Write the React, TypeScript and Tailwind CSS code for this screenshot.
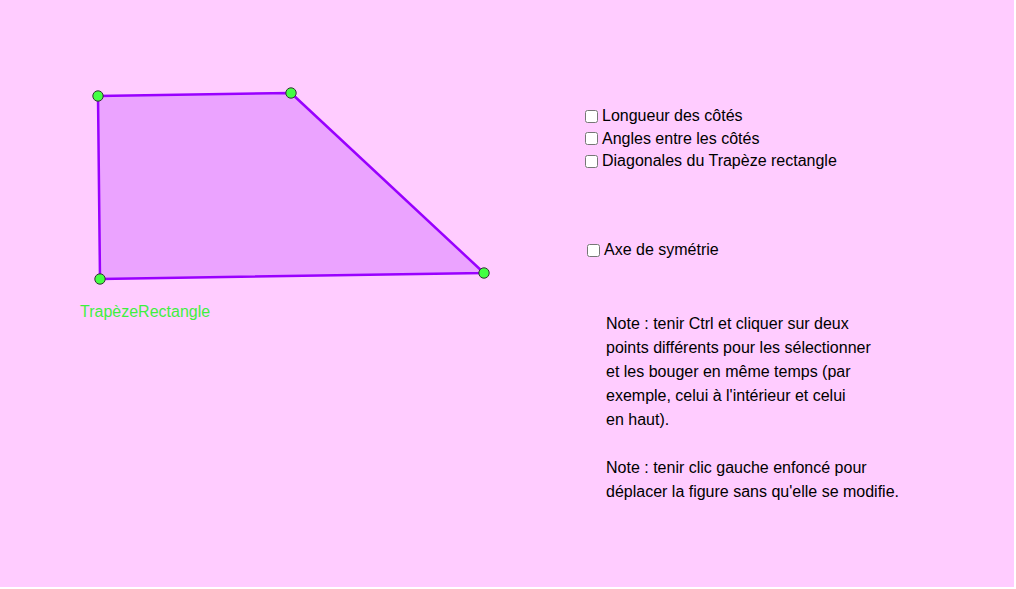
import React from 'react';

const font = { fontFamily: '"Liberation Sans", Arial, sans-serif' };

const points: [number, number][] = [
  [98, 96],
  [291, 93],
  [484, 273],
  [100, 279],
];

const options = ['Longueur des côtés', 'Angles entre les côtés', 'Diagonales du Trapèze rectangle'];

const CheckRow: React.FC<{ label: string }> = ({ label }) => (
  <label className="flex items-center h-[22.5px] text-[16px] text-black leading-none">
    <input type="checkbox" className="w-[13px] h-[13px] m-0" />
    <span className="ml-[4px]">{label}</span>
  </label>
);

export default function App() {
  return (
    <div className="w-[1016px] h-[589px] bg-white overflow-hidden" style={font}>
      <div className="relative w-[1014px] h-[587px] bg-[#ffccff]">
        {/* drawing canvas */}
        <svg className="absolute left-0 top-0" width="1014" height="587">
          <polygon
            points={points.map((p) => p.join(',')).join(' ')}
            fill="#9900ff"
            fillOpacity="0.2"
            stroke="#9900ff"
            strokeWidth="2.5"
            strokeLinejoin="round"
          />
          {points.map(([x, y], i) => (
            <circle key={i} cx={x} cy={y} r="5.2" fill="#44ff44" stroke="#333" strokeWidth="1" />
          ))}
        </svg>

        <div className="absolute left-[80px] top-[303px] text-[16px] leading-[18px] text-[#3fef3f]">
          TrapèzeRectangle
        </div>

        {/* controls panel */}
        <div className="absolute left-[585px] top-[104.75px] flex flex-col">
          <div className="flex flex-col">
            {options.map((o) => (
              <CheckRow key={o} label={o} />
            ))}
          </div>
          <div className="mt-[66.5px] ml-[2px]">
            <CheckRow label="Axe de symétrie" />
          </div>
          <div className="mt-[50.25px] ml-[21px] text-[16px] leading-[24px] text-black whitespace-nowrap">
            Note : tenir Ctrl et cliquer sur deux
            <br />
            points différents pour les sélectionner
            <br />
            et les bouger en même temps (par
            <br />
            exemple, celui à l'intérieur et celui
            <br />
            en haut).
            <br />
            <br />
            Note : tenir clic gauche enfoncé pour
            <br />
            déplacer la figure sans qu'elle se modifie.
          </div>
        </div>
      </div>
    </div>
  );
}
